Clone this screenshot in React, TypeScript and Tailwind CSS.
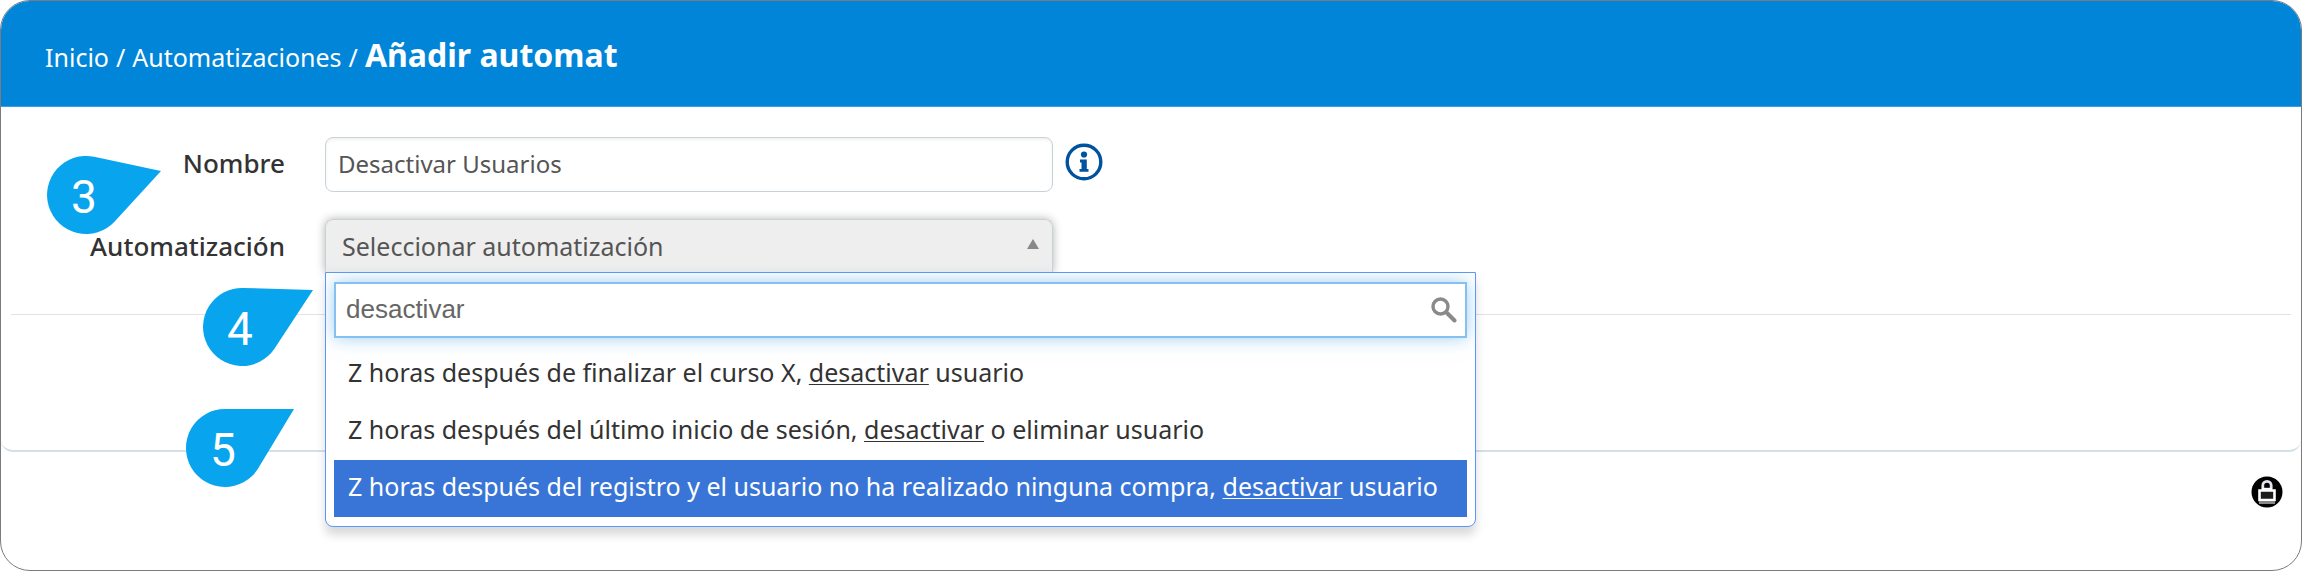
import { useState } from "react";

const TERM = "desactivar";

const OPTIONS = [
  "Z horas después de finalizar el curso X, desactivar usuario",
  "Z horas después del último inicio de sesión, desactivar o eliminar usuario",
  "Z horas después del registro y el usuario no ha realizado ninguna compra, desactivar usuario",
];

const R = 39;

// Round marker with a pointed tip; dx/dy is the tip measured from the centre.
function Callout({ label, dx, dy, className }: { label: string; dx: number; dy: number; className: string }) {
  const dir = Math.atan2(dy, dx);
  const spread = Math.acos(R / Math.hypot(dx, dy));
  const point = (a: number) => `${(R * Math.cos(a)).toFixed(1)} ${(R * Math.sin(a)).toFixed(1)}`;

  return (
    <div className={`absolute h-[78px] w-[78px] ${className}`}>
      <svg viewBox="-39 -39 78 78" className="h-full w-full overflow-visible" aria-hidden="true">
        <path d={`M${dx} ${dy}L${point(dir + spread)}A${R} ${R} 0 1 1 ${point(dir - spread)}Z`} fill="#08a5ee" />
      </svg>
      <span className="absolute inset-0 flex items-center justify-center pr-1 pt-1 font-['Roboto',sans-serif] text-[46px] leading-none text-white">
        {label}
      </span>
    </div>
  );
}

function InfoIcon() {
  return (
    <svg viewBox="0 0 38 38" className="h-[38px] w-[38px]" aria-hidden="true">
      <circle cx="19" cy="19" r="16.8" fill="none" stroke="#00529f" strokeWidth="3.4" />
      <circle cx="19" cy="11.5" r="3.1" fill="#00529f" />
      <path d="M15 16.600h6.800V26h1.700v2.800h-9V26h2v-6.600h-1.500z" fill="#00529f" />
    </svg>
  );
}

function SearchIcon() {
  return (
    <svg viewBox="0 0 26 26" className="h-[26px] w-[26px]" fill="none" stroke="#8a8a8a" aria-hidden="true">
      <circle cx="9.5" cy="9.5" r="7.5" strokeWidth="3.4" />
      <path d="M15.5 15.500l8 8" strokeWidth="4" strokeLinecap="round" />
    </svg>
  );
}

function LockIcon() {
  return (
    <svg viewBox="0 0 32 32" className="h-8 w-8" aria-hidden="true">
      <circle cx="16" cy="16" r="15.500" fill="#000" />
      <path d="M11.800 14V9.500a4.200 4.200 0 0 1 8.400 0V14" fill="none" stroke="#e4e4ec" strokeWidth="2.800" />
      <path d="M11 12.800h10" stroke="#fff" strokeWidth="2" />
      <path d="M8.500 14.500h15v9.500h-15z" fill="#1c1c1c" stroke="#fff" strokeWidth="2.600" />
      <path d="M8 26.500h16" stroke="#888" strokeWidth="3" />
    </svg>
  );
}

function Highlighted({ text }: { text: string }) {
  const [before, after] = text.split(TERM);
  return (
    <>
      {before}
      <span className="underline decoration-1 underline-offset-2">{TERM}</span>
      {after}
    </>
  );
}

export default function App() {
  const [name, setName] = useState("Desactivar Usuarios");
  const [query, setQuery] = useState(TERM);
  const [active, setActive] = useState(2);

  return (
    <div className="relative min-h-screen overflow-hidden rounded-[30px] border border-[#7b7b7b] bg-white font-['Noto_Sans',sans-serif] text-[25px]">
      <header className="flex h-[106px] items-center border-b border-[#3a9fe0] bg-[#0085d9] px-11 pt-0.5 text-white">
        <nav className="flex items-baseline gap-[7px]" aria-label="Ruta">
          <a href="#inicio">Inicio</a>
          <span>/</span>
          <a href="#automatizaciones">Automatizaciones</a>
          <span>/</span>
          <h1 className="text-[32px] font-bold">Añadir automat</h1>
        </nav>
      </header>

      <main className="rounded-b-xl border-b-2 border-[#d3e0e6] pb-[135px] pt-[30px]">
        <div className="flex items-center">
          <label htmlFor="nombre" className="w-[284px] pb-0.5 text-right text-[26px] font-medium text-[#333]">Nombre</label>
          <input
            id="nombre"
            value={name}
            onChange={(e) => setName(e.target.value)}
            className="ml-10 h-[55px] w-[728px] rounded-lg border border-[#c6d2d8] bg-white px-3 pb-0.5 text-2xl text-[#555] shadow-[inset_0_2px_3px_rgba(0,0,0,0.06)] outline-none"
          />
          <button type="button" className="ml-3 pb-1.5" aria-label="Información">
            <InfoIcon />
          </button>
        </div>

        <div className="mt-[27px] flex items-center">
          <label htmlFor="automatizacion" className="w-[284px] text-right text-[26px] font-medium text-[#333]">Automatización</label>
          <div className="relative ml-10 w-[728px]">
            <select
              id="automatizacion"
              className="block h-[54px] w-full appearance-none rounded-t-lg border border-b-0 border-[#c6d2d8] bg-linear-to-b from-[#eee] from-80% to-[#e8eaeb] px-4 text-[#555] shadow-[0_0_10px_rgba(0,0,0,0.3)] outline-none"
            >
              <option>Seleccionar automatización</option>
            </select>
            <svg viewBox="0 0 12 10" className="pointer-events-none absolute right-3.5 top-5 h-2.5 w-3" aria-hidden="true">
              <path d="M6 0l6 10H0z" fill="#888" />
            </svg>

            <div className="absolute left-0 top-full z-10 -mt-px w-[1151px] overflow-hidden rounded-b-lg border border-[#5897fb] bg-white px-2 pb-[9px] pt-[9px] shadow-[0_8px_10px_rgba(0,0,0,0.15)]">
              <div className="flex h-14 items-center border-2 border-[#84c1f0] bg-white pr-2 shadow-[0_0_16px_rgba(82,168,236,0.55)]">
                <input
                  type="text"
                  aria-label="Buscar automatización"
                  value={query}
                  onChange={(e) => setQuery(e.target.value)}
                  className="h-full flex-1 px-2.5 pb-0.5 font-['Liberation_Sans',sans-serif] text-[26px] text-[#666] outline-none"
                />
                <SearchIcon />
              </div>
              <ul role="listbox" aria-label="Automatizaciones" className="mt-2 leading-[53px]">
                {OPTIONS.map((option, i) => (
                  <li
                    key={option}
                    role="option"
                    aria-selected={i === active}
                    onMouseEnter={() => setActive(i)}
                    className={`whitespace-nowrap px-3.5 pb-1 ${i === active ? "bg-[#3875d7] text-white" : "text-[#333]"}`}
                  >
                    <Highlighted text={option} />
                  </li>
                ))}
              </ul>
            </div>
          </div>
        </div>

        <hr className="mx-2.5 mt-[41px] border-[#e3e3e3]" />
      </main>

      <footer className="flex justify-end px-[18px] pt-6">
        <button type="button" aria-label="Bloquear">
          <LockIcon />
        </button>
      </footer>

      <Callout label="3" dx={75} dy={-24} className="left-[46px] top-[155px]" />
      <Callout label="4" dx={71} dy={-37} className="left-[202px] top-[287px]" />
      <Callout label="5" dx={69} dy={-39} className="left-[185px] top-[408px]" />
    </div>
  );
}
